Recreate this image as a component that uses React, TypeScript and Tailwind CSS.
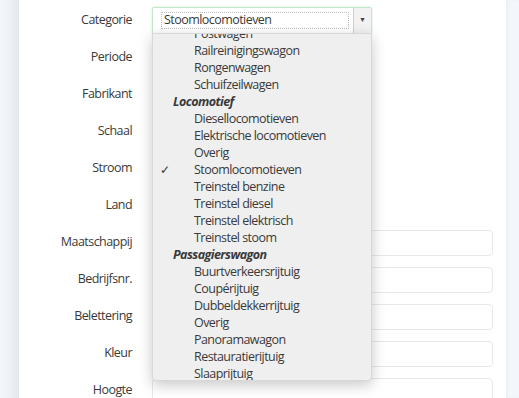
import React from "react";

type Item = { label: string; group?: boolean; checked?: boolean };

const items: Item[] = [
  { label: "Postwagen" },
  { label: "Railreinigingswagon" },
  { label: "Rongenwagen" },
  { label: "Schuifzeilwagen" },
  { label: "Locomotief", group: true },
  { label: "Diesellocomotieven" },
  { label: "Elektrische locomotieven" },
  { label: "Overig" },
  { label: "Stoomlocomotieven", checked: true },
  { label: "Treinstel benzine" },
  { label: "Treinstel diesel" },
  { label: "Treinstel elektrisch" },
  { label: "Treinstel stoom" },
  { label: "Passagierswagon", group: true },
  { label: "Buurtverkeersrijtuig" },
  { label: "Coupérijtuig" },
  { label: "Dubbeldekkerrijtuig" },
  { label: "Overig" },
  { label: "Panoramawagon" },
  { label: "Restauratierijtuig" },
  { label: "Slaaprijtuig" },
];

const selectRows = ["Periode", "Fabrikant", "Schaal", "Stroom", "Land"];
const inputRows = ["Maatschappij", "Bedrijfsnr.", "Belettering", "Kleur", "Hoogte"];

function Label({ text }: { text: string }) {
  return <div className="w-[113px] shrink-0 text-right text-[12.5px] tracking-[-0.55px] text-[#3a3a3a]">{text}</div>;
}

export default function App() {
  return (
    <div
      className="w-[519px] h-[398px] overflow-hidden flex bg-[#f3f6fb]"
      style={{ fontFamily: '"Open Sans", "Noto Sans", sans-serif' }}
    >
      {/* left page gutter */}
      <div className="w-[19px] shrink-0 bg-gradient-to-r from-[#f3f6fb] via-[#eef1f6] to-[#e4e7ec]" />

      {/* form card */}
      <div className="relative w-[487px] shrink-0 bg-white pt-[2px]">
        <div className="h-[37px] flex items-center gap-[20px]">
          <Label text="Categorie" />
          <div className="w-[220px] h-[27px] flex items-stretch border border-[#c6e6cc] rounded-[2px] shadow-[0_0_3px_#d3efd8] bg-white">
            <div className="flex-1 flex items-center pl-[8px] pr-[4px]">
              <div className="w-full h-[17px] border border-dotted border-[#bdbdbd] flex items-center pl-[2px] text-[12.5px] tracking-[-0.55px] text-[#3a3a3a] leading-none">
                Stoomlocomotieven
              </div>
            </div>
            <div className="w-[18px] flex items-center justify-center bg-[#f2f2f2] border-l border-[#cfcfcf] text-[7px] text-[#444]">
              ▼
            </div>
          </div>
        </div>

        {selectRows.map((r) => (
          <div key={r} className="h-[37px] flex items-center gap-[20px]">
            <Label text={r} />
            <div className="w-[220px] h-[26px] border border-[#e6e6e6] rounded-[3px]" />
          </div>
        ))}

        {inputRows.map((r) => (
          <div key={r} className="h-[37px] flex items-center gap-[20px]">
            <Label text={r} />
            <div className="w-[341px] h-[26px] border border-[#e8e8e8] rounded-[4px]" />
          </div>
        ))}

        {/* open dropdown list */}
        <div className="absolute left-[133px] top-[33px] w-[220px] h-[348px] overflow-hidden bg-[#efefef] border border-[#d8d8d8] rounded-b-[4px] shadow-[0_4px_14px_rgba(0,0,0,0.22)]">
          <div className="-mt-[9px]">
            {items.map((it, i) => (
              <div key={i} className="h-[17px] leading-[17px] text-[12.5px] tracking-[-0.55px] text-[#3a3a3a] relative whitespace-nowrap">
                {it.checked && <span className="absolute left-[7px] text-[12px]">✓</span>}
                {it.group ? (
                  <span className="pl-[20px] font-bold italic">{it.label}</span>
                ) : (
                  <span className="pl-[41px]">{it.label}</span>
                )}
              </div>
            ))}
          </div>
        </div>
      </div>

      {/* right page gutter */}
      <div className="flex-1 bg-[#f3f6fb] shadow-[inset_2px_0_3px_rgba(0,0,0,0.03)]" />
    </div>
  );
}
